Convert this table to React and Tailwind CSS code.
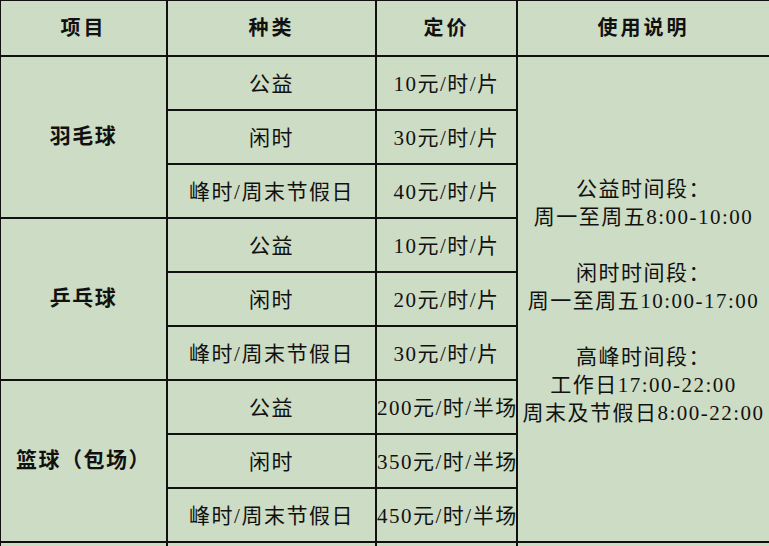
const rows = [
  { item: '羽毛球', prices: [['公益', '10元/时/片'], ['闲时', '30元/时/片'], ['峰时/周末节假日', '40元/时/片']] },
  { item: '乒乓球', prices: [['公益', '10元/时/片'], ['闲时', '20元/时/片'], ['峰时/周末节假日', '30元/时/片']] },
  { item: '篮球（包场）', prices: [['公益', '200元/时/半场'], ['闲时', '350元/时/半场'], ['峰时/周末节假日', '450元/时/半场']] },
]

const notes = [
  '公益时间段：',
  '周一至周五8:00-10:00',
  '',
  '闲时时间段：',
  '周一至周五10:00-17:00',
  '',
  '高峰时间段：',
  '工作日17:00-22:00',
  '周末及节假日8:00-22:00',
]

const cell = 'border-2 border-[#111] p-0 text-center align-middle'

export default function App() {
  return (
    <div
      className="h-[546px] w-[769px] overflow-hidden bg-[#cddcc4] text-[#111] text-[21px] tracking-[1.5px]"
      style={{ fontFamily: '"Liberation Serif", "Noto Sans CJK SC", serif' }}
    >
      <table className="table-fixed border-collapse w-[770px] -ml-px -mt-px">
        <colgroup>
          <col className="w-[167px]" />
          <col className="w-[209px]" />
          <col className="w-[141px]" />
          <col className="w-[253px]" />
        </colgroup>
        <thead>
          <tr className="h-[56px]">
            {['项目', '种类', '定价', '使用说明'].map((h) => (
              <th key={h} className={`${cell} font-bold text-[20px] tracking-[3px]`}>
                {h}
              </th>
            ))}
          </tr>
        </thead>
        <tbody>
          {rows.map((r, i) =>
            r.prices.map(([kind, price], j) => (
              <tr key={`${i}-${j}`} className="h-[54px]">
                {j === 0 && (
                  <td rowSpan={3} className={`${cell} font-bold text-[21px] tracking-[1.5px]`}>
                    {r.item}
                  </td>
                )}
                <td className={`${cell} pt-[4px]`}>{kind}</td>
                <td className={`${cell} pt-[4px] whitespace-nowrap overflow-hidden`}>{price}</td>
                {i === 0 && j === 0 && (
                  <td rowSpan={9} className={cell}>
                    <div className="flex flex-col items-center leading-[28px] whitespace-nowrap pt-[4px]">
                      {notes.map((n, k) => (
                        <div key={k} className="h-[28px]">{n}</div>
                      ))}
                    </div>
                  </td>
                )}
              </tr>
            ))
          )}
          <tr className="h-[54px]">
            <td className={cell}></td>
            <td className={cell}></td>
            <td className={cell}></td>
            <td className={cell}></td>
          </tr>
        </tbody>
      </table>
    </div>
  )
}
